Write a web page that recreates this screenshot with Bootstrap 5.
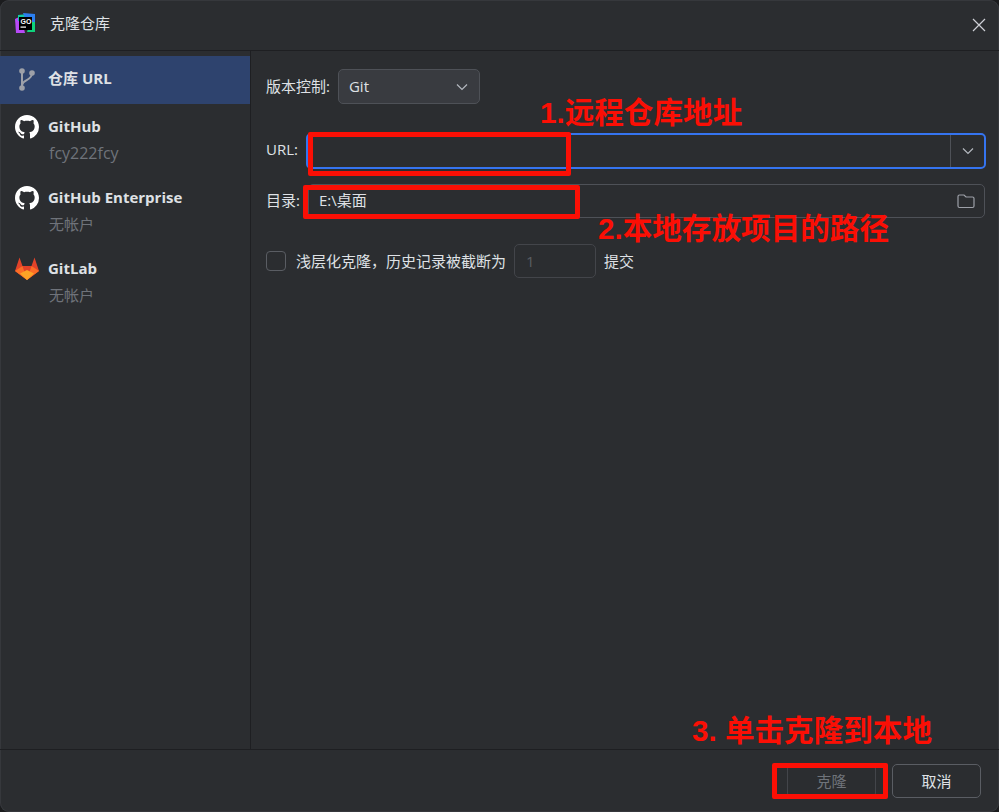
<!DOCTYPE html>
<html lang="zh-CN">
<head>
<meta charset="utf-8">
<title>克隆仓库</title>
<link href="https://cdn.jsdelivr.net/npm/bootstrap@5.3.0/dist/css/bootstrap.min.css" rel="stylesheet">
<style>
html,body{height:100%;margin:0;background:#1b1c1e;}
body{font-family:"Open Sans","Noto Sans CJK SC",sans-serif;font-size:15px;color:#dfe1e5;overflow:hidden;}
.win{width:999px;height:812px;background:#2b2d30;border-radius:9px;position:relative;overflow:hidden;box-shadow:inset 0 0 0 1px #36383c;}
.tbar{height:51px;border-bottom:1px solid #1e1f22;padding:0 0 3px 15px;}
.tbar .ttl{margin-left:14px;font-size:15px;color:#dfe1e5;}
.xbtn{margin-left:auto;margin-right:13px;margin-top:3px;display:flex;}
.mainrow{height:698px;}
.side{width:251px;border-right:1px solid #1e1f22;padding-top:5px;flex:none;}
.sitem{height:71px;padding:11px 0 0 15px;gap:9px;}
.sitem.sel{height:48px;background:#2e436e;padding-top:11px;}
.sico{width:24px;height:24px;flex:none;}
.sname{font-weight:700;font-size:15px;line-height:22px;color:#dfe1e5;}
.ssub{font-size:15px;line-height:28px;margin-top:2px;color:#6f737a;margin-left:1px;}
.subl{font-size:16px;}
.content{flex:1;padding:18px 13px 0 15px;min-width:0;}
.frow{display:flex;align-items:center;}
.lbl{font-size:15px;color:#dfe1e5;white-space:nowrap;}
.lift2{margin-top:-4px;}
.lift1{margin-top:-2px;}
.chklbl{margin-left:10px;}
.sel-git{width:142px;height:35px;margin-left:8px;background:#393b40;border:1px solid #4e5157;border-radius:5px;padding:0 11px 0 10px;display:flex;align-items:center;justify-content:space-between;font-size:15px;}
.urlbox{height:36px;flex:1;margin-left:8px;border:2px solid #3574f0;border-radius:5px;display:flex;justify-content:flex-end;}
.urlbtn{width:34px;border-left:1px solid #4e5157;display:flex;align-items:center;justify-content:center;}
.dirbox{height:34px;flex:1;margin:0 1px 0 8px;border:1px solid #4e5157;border-radius:5px;padding:0 9px 0 10px;display:flex;align-items:center;justify-content:space-between;font-size:15px;}
.dirtxt{margin-top:-2px;}
.chk{width:20px;height:20px;border:1px solid #5a5d63;border-radius:4px;flex:none;}
.numbox{width:82px;height:34px;border:1px solid #43454a;border-radius:5px;margin:0 8px;padding-left:11px;display:flex;align-items:center;color:#5a5d63;font-size:15px;}
.r1{margin-bottom:29px;}
.r2{margin-bottom:15px;}
.r3{margin-top:26px;}
.fbar{height:63px;border-top:1px solid #1e1f22;padding-right:18px;padding-top:14px;gap:16px;justify-content:flex-end;}
.bt{height:34px;border-radius:5px;font-size:15px;line-height:1;padding:0;width:89px;background:transparent;}
.bt.off{border:1px solid #43454a;color:#6f737a;padding-top:1px;}
.bt.on{border:1px solid #5a5d63;color:#dfe1e5;}
.mk{position:absolute;border:5px solid #fb0f05;border-radius:2px;pointer-events:none;}
.mk-url{left:308px;top:132px;width:263px;height:44px;}
.mk-dir{left:303px;top:185px;width:277px;height:34px;}
.mk-btn{left:772px;top:763px;width:116px;height:36px;}
.note{position:absolute;color:#fb0f05;font-weight:700;font-size:29.600px;line-height:36px;white-space:nowrap;font-family:"Liberation Sans","Noto Sans CJK SC",sans-serif;}
.note-a{left:540px;top:95px;}
.note-b{left:598px;top:211px;}
.note-c{left:692px;top:713px;}
.logo-t{font:700 7px "Liberation Sans",sans-serif;fill:#fff;}
</style>
</head>
<body>
<div class="win d-flex flex-column">
  <div class="tbar d-flex align-items-center flex-none">
    <svg width="21" height="21" viewBox="0 0 21 21"><path d="M0 6 6 3 10 20 1 20Z" fill="#b74af7"/><path d="M3 2 13 1V8H3Z" fill="#12c8a5"/><path d="M8 0 20 1 20 12 12 10Z" fill="#2b7ff0"/><path d="M15 9H20V19H12Z" fill="#0fd37c"/><rect x="4" y="4" width="13" height="13" fill="#000"/><text class="logo-t" x="5.500" y="11">GO</text><rect x="5.500" y="13.500" width="5.500" height="1.200" fill="#fff"/></svg>
    <span class="ttl">克隆仓库</span>
    <span class="xbtn"><svg width="14" height="14" viewBox="0 0 14 14"><path d="M1 1 13 13M13 1 1 13" stroke="#ced0d6" stroke-width="1.200"/></svg></span>
  </div>
  <div class="d-flex mainrow">
    <div class="side">
      <div class="sitem sel d-flex">
        <svg class="sico" viewBox="0 0 24 24"><g fill="#9da0a8"><circle cx="7" cy="4" r="2.800"/><circle cx="7" cy="21" r="2.800"/><circle cx="17" cy="6" r="2.800"/></g><path d="M7 4V21M7 18C8 12 17 14 17 6" fill="none" stroke="#9da0a8" stroke-width="2"/></svg>
        <span class="sname">仓库 URL</span>
      </div>
      <div>
        <div class="sitem d-flex">
          <svg class="sico" viewBox="0 0 16 16"><path fill="#fff" d="M8 0C3.580 0 0 3.580 0 8c0 3.540 2.290 6.530 5.470 7.590.4.070.55-.17.55-.38 0-.19-.01-.82-.01-1.490-2.010.37-2.530-.49-2.690-.94-.09-.23-.48-.94-.82-1.130-.28-.15-.68-.52-.01-.53.63-.01 1.080.58 1.230.82.720 1.210 1.870.87 2.330.660.070-.520.280-.870.510-1.070-1.780-.2-3.640-.890-3.640-3.950 0-.870.310-1.590.820-2.150-.08-.2-.36-1.020.080-2.120 0 0 .67-.21 2.200.820.640-.18 1.320-.27 2-.27s1.360.09 2 .27c1.530-1.040 2.200-.820 2.200-.820.440 1.100.160 1.920.080 2.120.510.560.820 1.270.820 2.150 0 3.070-1.870 3.750-3.650 3.950.290.250.540.730.540 1.480 0 1.070-.01 1.930-.01 2.200 0 .210.150.460.550.380A8.010 8.010 0 0 0 16 8c0-4.420-3.580-8-8-8z"/></svg>
          <div><div class="sname">GitHub</div><div class="ssub subl">fcy222fcy</div></div>
        </div>
        <div class="sitem d-flex">
          <svg class="sico" viewBox="0 0 16 16"><path fill="#fff" d="M8 0C3.580 0 0 3.580 0 8c0 3.540 2.290 6.530 5.470 7.590.4.070.55-.17.55-.38 0-.19-.01-.82-.01-1.490-2.010.37-2.530-.49-2.690-.94-.09-.23-.48-.94-.82-1.130-.28-.15-.68-.52-.01-.53.63-.01 1.080.58 1.230.82.720 1.210 1.870.87 2.330.660.070-.520.280-.870.510-1.070-1.780-.2-3.640-.890-3.640-3.950 0-.870.310-1.590.820-2.150-.08-.2-.36-1.020.080-2.120 0 0 .67-.21 2.200.820.640-.18 1.320-.27 2-.27s1.360.09 2 .27c1.530-1.040 2.200-.820 2.200-.820.440 1.100.160 1.920.080 2.120.510.560.820 1.270.820 2.150 0 3.070-1.870 3.750-3.650 3.950.290.250.540.730.540 1.480 0 1.070-.01 1.930-.01 2.200 0 .210.150.460.550.380A8.010 8.010 0 0 0 16 8c0-4.420-3.580-8-8-8z"/></svg>
          <div><div class="sname">GitHub Enterprise</div><div class="ssub">无帐户</div></div>
        </div>
        <div class="sitem d-flex">
          <svg class="sico" viewBox="0 0 24 24"><path d="M4.500 0.500 7.500 9H16.500L19.500 0.500 24 14 12 23 0 14Z" fill="#e24329"/><path d="M0 14 7.500 9 12 23Z" fill="#fc6d26"/><path d="M24 14 16.500 9 12 23Z" fill="#fc6d26"/><path d="M7.500 9H16.500L12 15Z" fill="#e24329"/><path d="M5 16.500 12 13 19 16.500 12 23Z" fill="#fca326"/></svg>
          <div><div class="sname">GitLab</div><div class="ssub">无帐户</div></div>
        </div>
      </div>
    </div>
    <div class="content">
      <div class="frow r1"><span class="lbl">版本控制:</span><div class="sel-git"><span>Git</span><svg width="12" height="8" viewBox="0 0 12 8"><path d="M1 1.500 6 6.500 11 1.500" fill="none" stroke="#b4b8bf" stroke-width="1.200"/></svg></div></div>
      <div class="frow r2"><span class="lbl lift2">URL:</span><div class="urlbox"><div class="urlbtn"><svg width="12" height="8" viewBox="0 0 12 8"><path d="M1 1.500 6 6.500 11 1.500" fill="none" stroke="#b4b8bf" stroke-width="1.200"/></svg></div></div></div>
      <div class="frow"><span class="lbl lift1">目录:</span><div class="dirbox"><span class="dirtxt">E:\桌面</span><svg width="18" height="16" viewBox="0 0 18 16"><path d="M1 3.500A1.500 1.500 0 0 1 2.500 2H7L9 4H15.500A1.500 1.500 0 0 1 17 5.500V13A1.500 1.500 0 0 1 15.500 14.500H2.500A1.500 1.500 0 0 1 1 13Z" fill="none" stroke="#9da0a8" stroke-width="1.200"/></svg></div></div>
      <div class="frow r3"><span class="chk"></span><span class="lbl chklbl">浅层化克隆，历史记录被截断为</span><div class="numbox">1</div><span class="lbl">提交</span></div>
    </div>
  </div>
  <div class="fbar d-flex">
    <button class="bt off" type="button" disabled>克隆</button>
    <button class="bt on" type="button">取消</button>
  </div>
  <div class="mk mk-url"></div>
  <div class="mk mk-dir"></div>
  <div class="mk mk-btn"></div>
  <div class="note note-a">1.远程仓库地址</div>
  <div class="note note-b">2.本地存放项目的路径</div>
  <div class="note note-c">3. 单击克隆到本地</div>
</div>
<script src="https://cdn.jsdelivr.net/npm/bootstrap@5.3.0/dist/js/bootstrap.bundle.min.js"></script>
</body>
</html>
